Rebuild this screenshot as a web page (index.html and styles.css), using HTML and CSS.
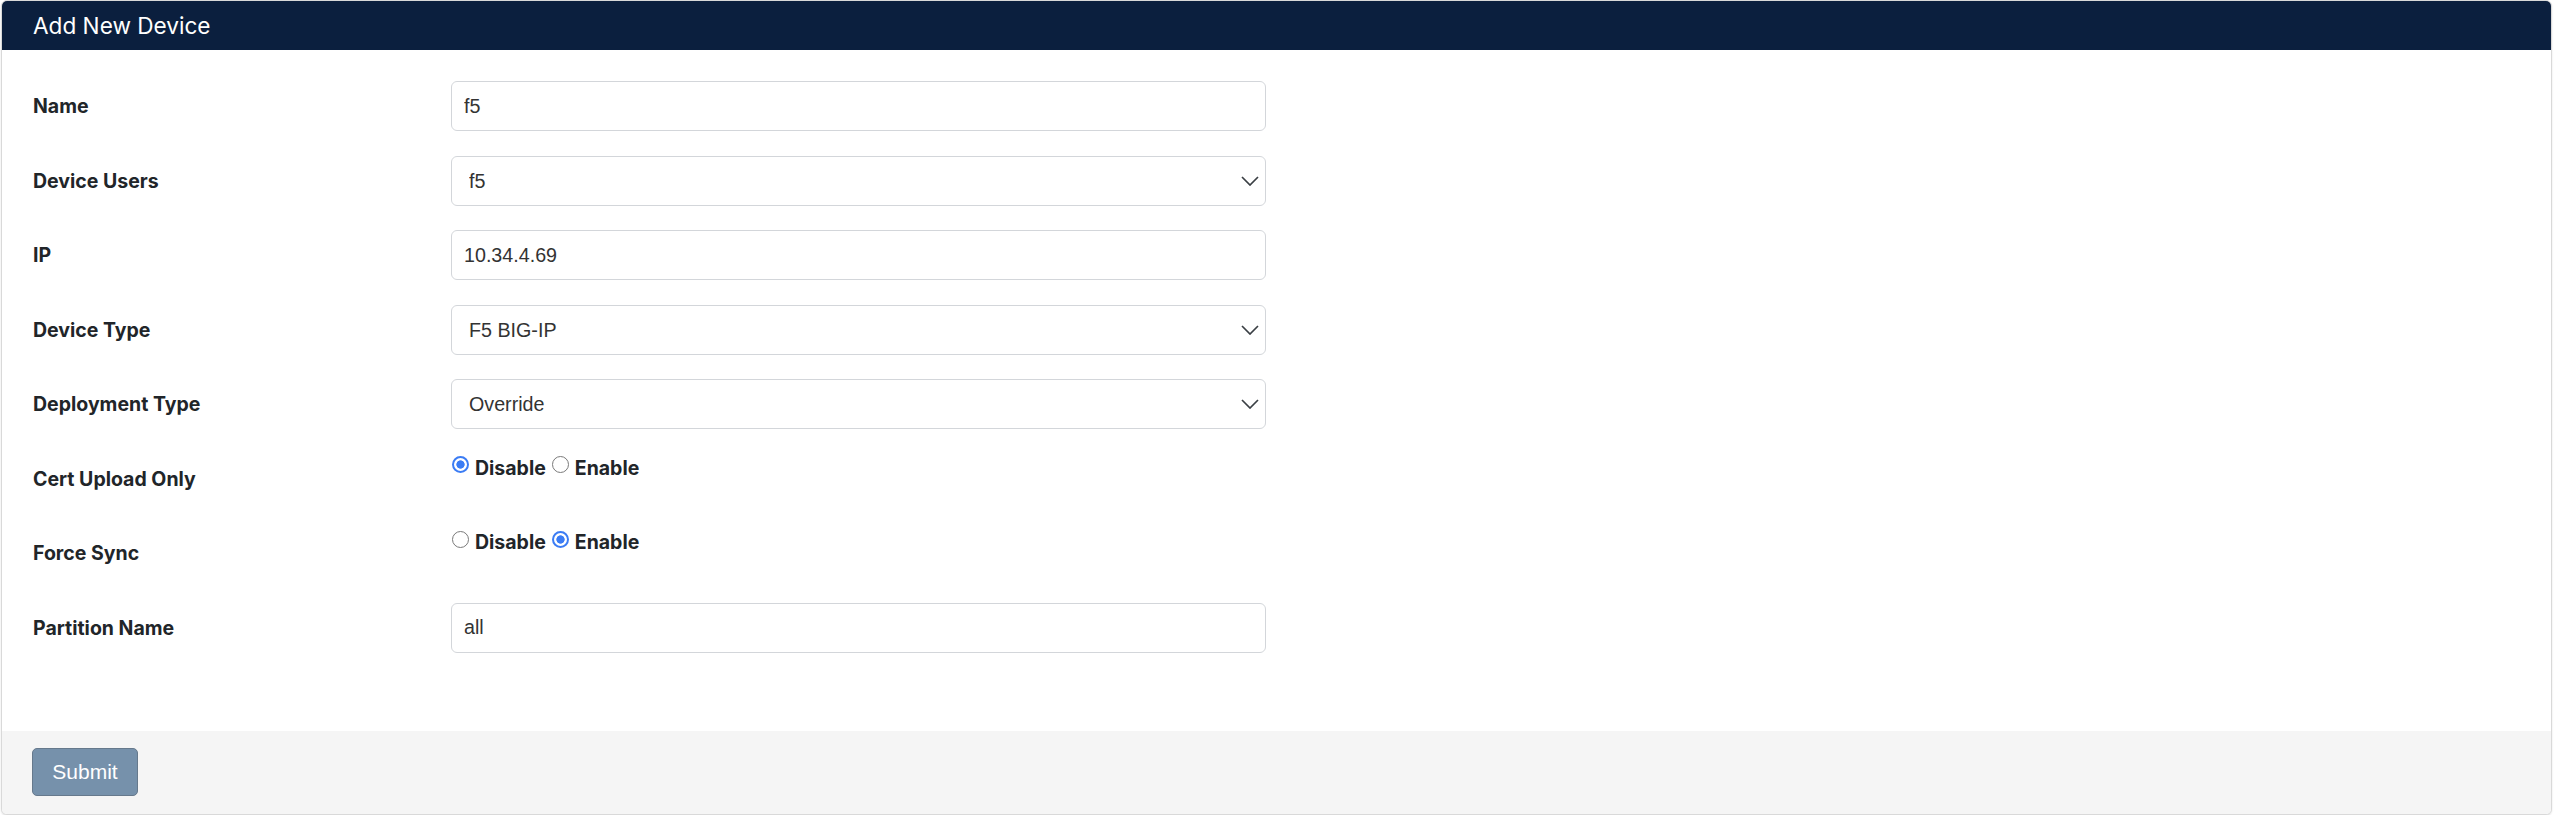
FILE: index.html
```html
<!DOCTYPE html>
<html lang="en">
<head>
<meta charset="utf-8">
<title>Add New Device</title>
<link rel="stylesheet" href="styles.css">
</head>
<body>
<div class="page">
  <form class="card">
    <div class="card-header">Add New Device</div>
    <div class="card-body">
      <label class="form-label" for="name">Name</label>
      <div class="control"><input class="form-input" id="name" type="text" value="f5"></div>

      <label class="form-label" for="users">Device Users</label>
      <div class="control select-wrap">
        <select class="form-select" id="users"><option>f5</option></select>
        <svg class="chevron" viewBox="0 0 18 10" width="18" height="10"><path d="M1 1l8 8 8-8" fill="none" stroke="#3a3f44" stroke-width="1.7"/></svg>
      </div>

      <label class="form-label" for="ip">IP</label>
      <div class="control"><input class="form-input" id="ip" type="text" value="10.34.4.69"></div>

      <label class="form-label" for="dtype">Device Type</label>
      <div class="control select-wrap">
        <select class="form-select" id="dtype"><option>F5 BIG-IP</option></select>
        <svg class="chevron" viewBox="0 0 18 10" width="18" height="10"><path d="M1 1l8 8 8-8" fill="none" stroke="#3a3f44" stroke-width="1.7"/></svg>
      </div>

      <label class="form-label" for="deploy">Deployment Type</label>
      <div class="control select-wrap">
        <select class="form-select" id="deploy"><option>Override</option></select>
        <svg class="chevron" viewBox="0 0 18 10" width="18" height="10"><path d="M1 1l8 8 8-8" fill="none" stroke="#3a3f44" stroke-width="1.7"/></svg>
      </div>

      <span class="form-label">Cert Upload Only</span>
      <div class="control radios">
        <label class="radio"><input type="radio" name="cert" checked><span>Disable</span></label>
        <label class="radio"><input type="radio" name="cert"><span>Enable</span></label>
      </div>

      <span class="form-label">Force Sync</span>
      <div class="control radios">
        <label class="radio"><input type="radio" name="sync"><span>Disable</span></label>
        <label class="radio"><input type="radio" name="sync" checked><span>Enable</span></label>
      </div>

      <label class="form-label" for="part">Partition Name</label>
      <div class="control"><input class="form-input" id="part" type="text" value="all"></div>
    </div>
    <div class="card-footer">
      <button class="btn-submit" type="button">Submit</button>
    </div>
  </form>
</div>
</body>
</html>
```

FILE: styles.css
```css
* { box-sizing: border-box; }

html, body {
  margin: 0;
  background: #ffffff;
}

.page {
  padding: 0 6px 0 1px;
}

.card {
  display: flex;
  flex-direction: column;
  border: 1px solid #d9d9d9;
  border-radius: 6px;
  overflow: hidden;
  box-shadow: 0 1px 2px rgba(0, 0, 0, 0.12);
  background: #ffffff;
  font-family: Inter, "Noto Sans", sans-serif;
}

.card-header {
  height: 49px;
  display: flex;
  align-items: center;
  padding-left: 31px;
  background: #0b1f3e;
  color: #ffffff;
  font-size: 22.6px;
  font-weight: 400;
}

.card-body {
  display: grid;
  grid-template-columns: 418px 815px;
  grid-auto-rows: 50px;
  row-gap: 24.5px;
  padding: 31px 31px 78px 31px;
}

.form-label {
  display: flex;
  align-items: center;
  font-size: 19.5px;
  font-weight: 700;
  color: #212529;
}

.control {
  position: relative;
}

.form-input,
.form-select {
  display: block;
  width: 100%;
  height: 50px;
  margin: 0;
  border: 1px solid #d3d6da;
  border-radius: 6px;
  background: #ffffff;
  color: #333333;
  font-family: "Liberation Sans", Arial, sans-serif;
  font-size: 19.7px;
  outline: none;
}

.form-input {
  padding: 0 12px;
}

.form-select {
  appearance: none;
  -webkit-appearance: none;
  padding: 0 40px 0 17px;
}

.chevron {
  position: absolute;
  right: 7px;
  top: 20px;
  pointer-events: none;
}

.radios {
  display: flex;
  align-items: flex-start;
  padding-top: 2px;
}

.radio {
  display: inline-flex;
  align-items: center;
  margin-right: 5px;
  font-size: 19.5px;
  font-weight: 700;
  color: #212529;
}

.radio input {
  appearance: none;
  -webkit-appearance: none;
  flex: none;
  width: 17px;
  height: 17px;
  margin: 0 6px 6px 1px;
  border: 1px solid #7a7a7a;
  border-radius: 50%;
  background: #ffffff;
}

.radio input:checked {
  border: 2px solid #3b7cf4;
  background: radial-gradient(circle, #3b7cf4 0 3.8px, #ffffff 4.5px);
}

.card-footer {
  height: 83px;
  display: flex;
  align-items: center;
  padding-left: 30px;
  background: #f5f5f5;
}

.btn-submit {
  width: 106px;
  height: 48px;
  border: 1px solid #66798c;
  border-radius: 5px;
  background: #7691ab;
  color: #ffffff;
  font-family: "Liberation Sans", Arial, sans-serif;
  font-size: 21px;
  padding: 0;
}
```
